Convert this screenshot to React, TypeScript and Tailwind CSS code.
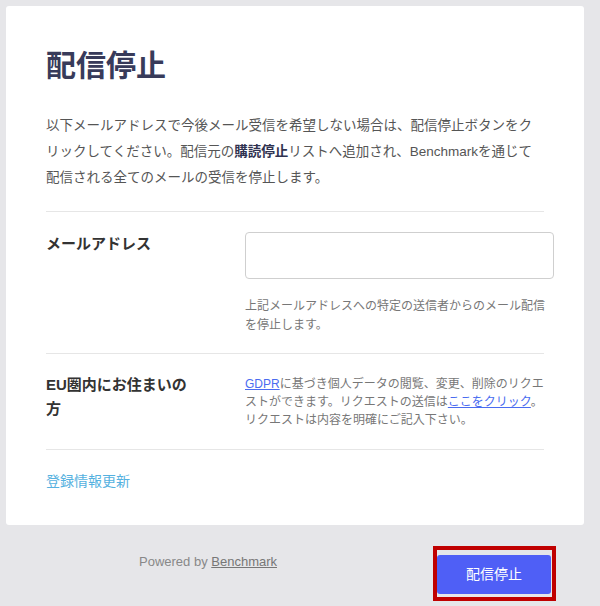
export default function App() {
  return (
    <div className="min-h-[606px] w-[600px] bg-[#e6e6e9] pt-[6px] font-['Liberation_Sans','Noto_Sans_CJK_JP',sans-serif]">
      <div className="ml-[6px] w-[578px] rounded-[3px] bg-white pl-[40px] pr-[30px] pt-[40px] pb-[32px]">
        <h1 className="text-[30px] leading-[40px] font-bold text-[#383b5a]">配信停止</h1>

        <p className="mt-[27px] w-[498px] whitespace-nowrap text-[13.5px] leading-[26px] text-[#555]">
          以下メールアドレスで今後メール受信を希望しない場合は、配信停止ボタンをク
          <br />
          リックしてください。配信元の<span className="font-bold text-[#2f3250]">購読停止</span>リストへ追加され、Benchmarkを通じて
          <br />
          配信される全てのメールの受信を停止します。
        </p>

        <div className="mt-[20px] w-[498px] border-t border-[#e6e6e6]" />

        <div className="flex pt-[20px] pb-[18px]">
          <div className="w-[199px] pt-px text-[15px] leading-[22px] font-bold text-[#333]">メールアドレス</div>
          <div className="w-[309px]">
            <input
              type="text"
              className="block h-[47px] w-[309px] rounded-[4px] border border-[#cfcfcf] bg-white px-3 outline-none"
            />
            <p className="mt-[18px] whitespace-nowrap text-[12px] leading-[19px] text-[#777]">
              上記メールアドレスへの特定の送信者からのメール配信
              <br />
              を停止します。
            </p>
          </div>
        </div>

        <div className="w-[498px] border-t border-[#e6e6e6]" />

        <div className="flex pt-[19px] pb-[20px]">
          <div className="w-[199px] whitespace-nowrap text-[15px] leading-[24px] font-bold text-[#333]">
            EU圏内にお住まいの
            <br />
            方
          </div>
          <p className="mt-[2px] whitespace-nowrap text-[12px] leading-[18px] text-[#777]">
            <a href="#" className="text-[#4a6cf0] underline">GDPR</a>に基づき個人データの閲覧、変更、削除のリクエ
            <br />
            ストができます。リクエストの送信は<a href="#" className="text-[#4a6cf0] underline">ここをクリック</a>。
            <br />
            リクエストは内容を明確にご記入下さい。
          </p>
        </div>

        <div className="w-[498px] border-t border-[#e6e6e6]" />

        <div className="pt-[19px]">
          <a href="#" className="text-[14px] leading-[20px] text-[#55b1e0]">登録情報更新</a>
        </div>
      </div>

      <div className="flex items-start pt-[21px]">
        <div className="ml-[139px] mt-[6px] text-[13px] leading-[20px] text-[#888]">
          Powered by <a href="#" className="text-[#777] underline">Benchmark</a>
        </div>
        <div className="ml-auto mr-[44px] border-4 border-[#c00000] pt-[5px] pb-[3px] pr-px">
          <button className="flex h-[39px] w-[114px] items-center justify-center rounded-[3px] bg-[#4f5ff6] text-[14px] text-white">
            配信停止
          </button>
        </div>
      </div>
    </div>
  );
}
